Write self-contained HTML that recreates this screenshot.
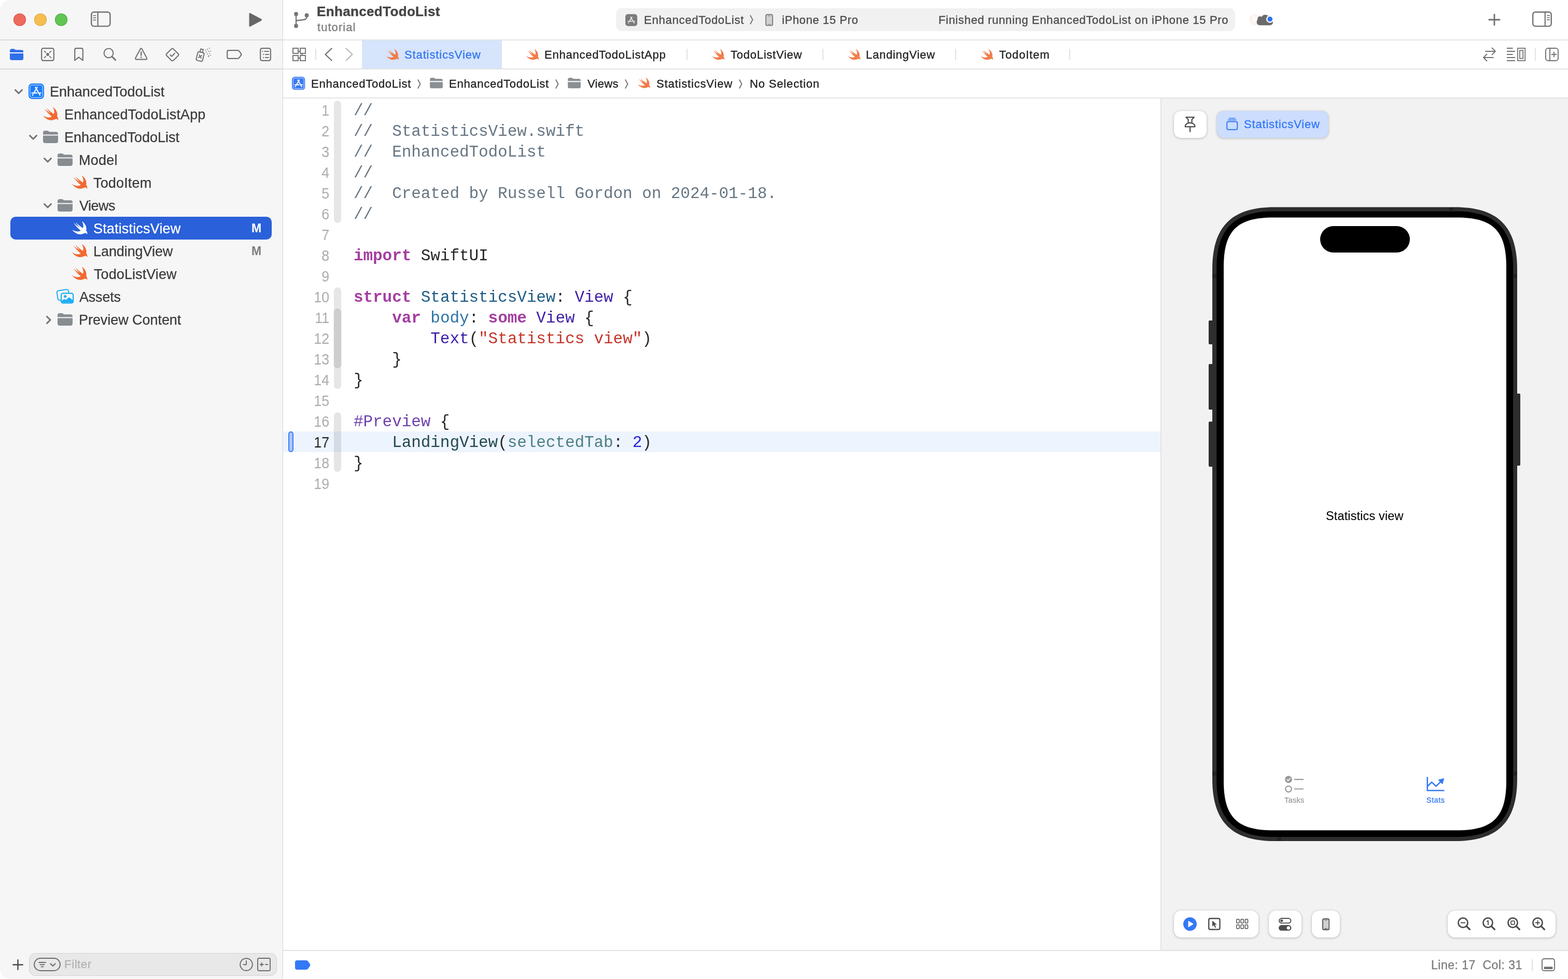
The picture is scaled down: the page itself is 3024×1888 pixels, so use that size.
<!DOCTYPE html>
<html lang="en">
<head>
<meta charset="utf-8">
<title>EnhancedTodoList — StatisticsView.swift</title>
<style>
*{box-sizing:border-box;margin:0;padding:0}
html,body{width:3024px;height:1888px;overflow:hidden;background:#fff}
body{font-family:"Liberation Sans",sans-serif;color:#262626;position:relative}
.abs{position:absolute}
.t{position:absolute;line-height:1;white-space:pre;-webkit-text-stroke-width:.35px}
.t,.m,#code,#nums{will-change:transform}
svg{position:absolute;overflow:visible}
.hl{position:absolute;background:#e4e4e4}
/* panels */
#sidebar{left:0;top:0;width:545px;height:1888px;background:#f6f6f6;border-radius:20px 0 0 20px}
#sbline{left:544px;top:0;width:2px;height:1888px;background:linear-gradient(to right,#ececec 0,#ececec 50%,#dedede 50%,#dedede 100%)}
#preview{left:2239px;top:190px;width:785px;height:1642px;background:#f2f2f2}
#pvline{left:2238px;top:190px;width:2px;height:1642px;background:#e3e3e3}
/* sidebar rows */
.row{position:absolute;left:0;width:545px;height:44px}
.row .t{font-size:27px;color:#3a3a3a;top:9.300px;-webkit-text-stroke-width:.25px}
.row svg{top:0}
.m{position:absolute;font-weight:bold;font-size:23px;line-height:1;top:10.800px;left:485.400px;color:#7d7d7d}
#sel{left:20px;top:418px;width:504px;height:44px;border-radius:10px;background:#2a60d9}
/* tabs */
.tabt{top:94.800px;color:#222}
.bct{top:150.900px;color:#222}
.sep{position:absolute;width:2px;background:#e2e2e2}
/* code */
#code{left:681.800px;top:193.700px;font-family:"Liberation Mono",monospace;font-size:31px;letter-spacing:-.063px;line-height:40px;white-space:pre;color:#262626}
#code b{font-weight:bold;color:#a43ea1}
.c{color:#677683}.ty{color:#1d5c85}.v{color:#3d1da8}.p{color:#2b74aa}.s{color:#c5352a}.pp{color:#6f41ad}.lv{color:#23494e}.a{color:#4c7f86}.n{color:#2923d5}
#nums{left:546px;top:193px;width:89.200px;text-align:right;font-size:29px;line-height:40px;color:#acacac;white-space:pre;transform:scaleX(.93);transform-origin:100% 0}
.rib{position:absolute;left:644px;width:14px;border-radius:7px;background:#e6e6e6}
.btn{position:absolute;background:#fff;border-radius:13px;box-shadow:0 1px 5px rgba(0,0,0,.24),0 0 1px rgba(0,0,0,.14)}
</style>
</head>
<body>
<div id="sidebar" class="abs"></div>
<div id="sbline" class="abs"></div>
<!-- horizontal dividers -->
<div class="hl" style="left:0;top:76px;width:544px;height:2px;background:#d9d9d9"></div>
<div class="hl" style="left:0;top:132px;width:544px;height:2px;background:#d9d9d9"></div>
<div class="hl" style="left:546px;top:76px;width:2478px;height:2px"></div>
<div class="hl" style="left:546px;top:132px;width:2478px;height:2px"></div>
<div class="hl" style="left:546px;top:188px;width:2478px;height:2px"></div>
<div class="hl" style="left:546px;top:1832px;width:2478px;height:2px;background:#e1e1e1"></div>
<div id="preview" class="abs"></div>
<div id="pvline" class="abs"></div>
<!-- icon symbols -->
<svg width="0" height="0" style="position:absolute">
<defs>
<symbol id="swift" viewBox="2.41 3.41 18.12 16.21" preserveAspectRatio="none"><path d="M13.543 3.41c4.114 2.47 6.545 7.162 5.549 11.131-.024.093-.05.181-.076.272l.002.001c2.062 2.538 1.5 5.258 1.236 4.745-1.072-2.086-3.066-1.568-4.088-1.043a6.803 6.803 0 0 1-.281.158l-.02.012-.002.002c-2.115 1.123-4.957 1.205-7.812-.022a12.568 12.568 0 0 1-5.64-4.838c.649.48 1.35.902 2.097 1.252 3.019 1.414 6.051 1.311 8.197-.002C9.651 12.73 7.101 9.67 5.146 7.191a10.628 10.628 0 0 1-1.005-1.384c2.34 2.142 6.038 4.83 7.365 5.576C8.69 8.408 6.208 4.743 6.324 4.86c4.436 4.47 8.528 6.996 8.528 6.996.154.085.27.154.36.213.085-.215.16-.437.224-.668.708-2.588-.09-5.548-1.893-7.992z"/></symbol>
<symbol id="folder" viewBox="0 0 29 24"><path d="M0 4Q0 0 4 0H8.2Q9.6 0 10.8 1L12.2 2.2H25Q29 2.200 29 6.200V7.400H0Z"/><path d="M0 9.600H29V19.800Q29 24 24.800 24H4.200Q0 24 0 19.800Z"/></symbol>
<symbol id="chev" viewBox="0 0 16 10"><path d="M1.500 1.500L8 8L14.500 1.500" fill="none" stroke="currentColor" stroke-width="3" stroke-linecap="round" stroke-linejoin="round"/></symbol>
<symbol id="chevr" viewBox="0 0 10 16"><path d="M1.500 1.500L8 8L1.500 14.500" fill="none" stroke="currentColor" stroke-width="3" stroke-linecap="round" stroke-linejoin="round"/></symbol>
<symbol id="proj" viewBox="0 0 30 30"><rect x="0" y="0" width="30" height="30" rx="7" fill="currentColor"/><rect x="2.800" y="2.800" width="24.400" height="24.400" rx="4.500" fill="none" stroke="#fff" stroke-opacity=".7" stroke-width="1.300"/><g fill="none" stroke="#fff" stroke-width="2.200" stroke-linecap="round"><path d="M6.500 18.300H16.500"/><path d="M21.300 18.300H23.700"/><path d="M16.800 7.300L10.300 18.300"/><path d="M8.600 21.300L7.800 22.600"/><path d="M13.300 7.300L22.200 22.500"/></g></symbol>
<symbol id="bcsep" viewBox="0 0 7 18"><path d="M1.300 1.200L5.500 9L1.300 16.800" fill="none" stroke="#7a7a7a" stroke-width="2.100" stroke-linecap="round" stroke-linejoin="round"/></symbol>
<symbol id="phone" viewBox="0 0 15 24" preserveAspectRatio="none"><rect x="1" y="1" width="13" height="22" rx="3" fill="#d0d0d0" stroke="currentColor" stroke-width="2"/><path d="M5.500 3.700H9.500M5 20.400H10" stroke="currentColor" stroke-width="1.200" fill="none" stroke-linecap="round"/></symbol>
<symbol id="mag" viewBox="0 0 25 25"><circle cx="10.500" cy="10.500" r="9.100" fill="none" stroke="currentColor" stroke-width="2.700"/><path d="M17.200 17.200L23.400 23.400" stroke="currentColor" stroke-width="3.300" stroke-linecap="round"/></symbol>
</defs>
</svg>

<!-- window toolbar -->
<div class="abs" style="left:26px;top:26px;width:24px;height:24px;border-radius:50%;background:#ee6a5e;box-shadow:inset 0 0 0 1px #dd4f45"></div>
<div class="abs" style="left:66px;top:26px;width:24px;height:24px;border-radius:50%;background:#f5be4f;box-shadow:inset 0 0 0 1px #dca63d"></div>
<div class="abs" style="left:106px;top:26px;width:24px;height:24px;border-radius:50%;background:#61c554;box-shadow:inset 0 0 0 1px #4cab3e"></div>
<svg style="left:175px;top:22px" width="38.600" height="30" viewBox="0 0 38 30" preserveAspectRatio="none"><rect x="1.200" y="1.200" width="35.600" height="27.400" rx="5" fill="none" stroke="#727272" stroke-width="2.400"/><path d="M13.500 1.500V28.500" stroke="#727272" stroke-width="2.200"/><path d="M5 8H9.500M5 12.300H9.500M5 16.600H9.500" stroke="#727272" stroke-width="1.700" stroke-linecap="round"/></svg>
<svg style="left:478.700px;top:23.700px" width="27.500" height="28.600" viewBox="0 0 27 28" preserveAspectRatio="none"><path d="M1.500 2.500Q1.500 0.300 3.600 1.300L24.800 12.600Q26.500 14 24.800 15.400L3.600 26.700Q1.500 27.700 1.500 25.500Z" fill="#666"/></svg>
<svg style="left:566.700px;top:23px" width="29" height="31" viewBox="0 0 29 31"><g fill="#757575"><circle cx="4" cy="4" r="3.900"/><circle cx="4" cy="27" r="3.900"/><circle cx="24.500" cy="6.500" r="3.900"/></g><path d="M4 4V27M4 18Q4 16.800 6 16.500L19 15Q24.500 14.300 24.500 9V6.500" fill="none" stroke="#757575" stroke-width="2.300"/></svg>
<div class="t" style="left:611.00px;font-size:26px;letter-spacing:0.356px;-webkit-text-stroke-width:.45px;top:9.300px;font-weight:bold;color:#454545">EnhancedTodoList</div>
<div class="t" style="left:612.00px;font-size:22px;letter-spacing:1.051px;top:41.900px;color:#7c7c7c">tutorial</div>
<!-- scheme / activity pill -->
<div class="abs" style="left:1188px;top:16px;width:1194px;height:44px;border-radius:11px;background:#f1f1f1"></div>
<svg style="left:1206px;top:26.500px" width="23" height="23.500" viewBox="0 0 30 30"><rect width="30" height="30" rx="6.500" fill="#7b7b7b"/><g fill="none" stroke="#f1f1f1" stroke-width="2.100" stroke-linecap="round"><path d="M6.500 18.300H16.500"/><path d="M21.300 18.300H23.700"/><path d="M16.800 7.300L10.300 18.300"/><path d="M8.600 21.300L7.800 22.600"/><path d="M13.300 7.300L22.200 22.500"/></g></svg>
<div class="t" style="left:1242.00px;font-size:22px;letter-spacing:0.756px;top:28.200px;color:#4b4b4b">EnhancedTodoList</div>
<svg style="left:1446px;top:29px" width="7" height="18"><use href="#bcsep"/></svg>
<svg style="left:1476.300px;top:26.500px;color:#828282" width="15" height="23.300"><use href="#phone"/></svg>
<div class="t" style="left:1507.75px;font-size:22px;letter-spacing:0.608px;top:28.200px;color:#4b4b4b">iPhone 15 Pro</div>
<div class="t" style="left:1809.75px;font-size:22px;letter-spacing:0.664px;top:28.200px;color:#4b4b4b">Finished running EnhancedTodoList on iPhone 15 Pro</div>
<!-- cloud status -->
<div class="abs" style="left:2409px;top:27px;width:22px;height:22px;border-radius:50%;background:#fdf2f1"></div>
<svg style="left:2414px;top:31px" width="12" height="12" viewBox="0 0 12 12"><path d="M2 2L10 10M10 2L2 10" stroke="#fff" stroke-width="2.400" stroke-linecap="round"/></svg>
<svg style="left:2423px;top:28px" width="33" height="22" viewBox="0 0 33 22"><path d="M6.800 20.700C3 20.700 0.700 18 0.700 14.800C0.700 13 1.300 11.200 2.300 9.800C2.200 6 4 3.700 6.500 3.600C8 3.500 9.300 4 10.200 4.800C11.500 2 13.800 0.500 16.500 0.500C22 0.500 25 3.500 26 7.500C30 8.500 32 11 32 14.500C32 18.500 29.500 20.700 25.500 20.700Z" fill="#6b6b6b"/><circle cx="26.200" cy="8.900" r="7.200" fill="#fff"/><circle cx="26.200" cy="8.900" r="4.800" fill="#2f6ff0"/></svg>
<svg style="left:2870px;top:26px" width="24" height="24" viewBox="0 0 24 24"><path d="M12 1.800V22.200M1.800 12H22.200" stroke="#6f6f6f" stroke-width="2.800" stroke-linecap="round"/></svg>
<svg style="left:2955px;top:22px" width="38" height="30" viewBox="0 0 38 30"><rect x="1.200" y="1.200" width="35.600" height="27.400" rx="5" fill="none" stroke="#727272" stroke-width="2.400"/><path d="M24.800 1.500V28.500" stroke="#727272" stroke-width="2.200"/><path d="M29 7.800H33.300M29 12H33.300M29 16.200H33.300" stroke="#727272" stroke-width="1.700" stroke-linecap="round"/></svg>

<!-- navigator selector icons -->
<svg style="left:19px;top:93.700px;color:#2f6fea" width="26.200" height="22.400" fill="#2f6fea"><use href="#folder"/></svg>
<svg style="left:79px;top:92px" width="26" height="26" viewBox="0 0 26 26"><rect x="1.200" y="1.200" width="23.600" height="23.600" rx="3.200" fill="none" stroke="#727272" stroke-width="2.200"/><circle cx="13" cy="13" r="2.900" fill="#727272"/><path d="M6.700 6.700L9.300 9.300M19.300 6.700L16.700 9.300M6.700 19.300L9.300 16.700M19.300 19.300L16.700 16.700" stroke="#727272" stroke-width="1.900" stroke-linecap="round"/></svg>
<svg style="left:143px;top:92px" width="18" height="26" viewBox="0 0 18 26"><path d="M1.200 24.500V4Q1.200 1.200 4 1.200H14Q16.800 1.200 16.800 4V24.500L9 18.300Z" fill="none" stroke="#727272" stroke-width="2.200" stroke-linejoin="round"/></svg>
<svg style="left:199px;top:92px" width="26" height="26" viewBox="0 0 26 26"><circle cx="10.500" cy="10.400" r="8.900" fill="none" stroke="#727272" stroke-width="2.100"/><path d="M17.200 17.200L23.600 23.600" stroke="#727272" stroke-width="3" stroke-linecap="round"/></svg>
<svg style="left:260px;top:92px" width="25" height="24" viewBox="0 0 25 24"><path d="M12.200 1.300Q13.100 1.300 13.600 2.200L23 19.800Q24 22.500 21.600 22.600H2.800Q0.400 22.500 1.400 19.800L10.800 2.200Q11.300 1.300 12.200 1.300Z" fill="none" stroke="#727272" stroke-width="2.100" stroke-linejoin="round"/><path d="M12.200 8.400V14.600" stroke="#727272" stroke-width="2.500" stroke-linecap="round"/><circle cx="12.200" cy="18.600" r="1.500" fill="#727272"/></svg>
<svg style="left:318.500px;top:91.800px" width="27" height="27" viewBox="0 0 27 27"><path d="M13.500 1.500Q14.400 1.500 15.200 2.300L24.700 11.800Q26.200 13.500 24.700 15.200L15.200 24.700Q13.500 26.200 11.800 24.700L2.300 15.200Q0.800 13.500 2.300 11.800L11.800 2.300Q12.600 1.500 13.500 1.500Z" fill="none" stroke="#727272" stroke-width="2.100"/><path d="M9.200 13.800L12.200 16.800L18 10.800" fill="none" stroke="#727272" stroke-width="2.100" stroke-linecap="round" stroke-linejoin="round"/></svg>
<svg style="left:377px;top:91px" width="31" height="28" viewBox="0 0 31 28"><g transform="rotate(14 9 17)" fill="none" stroke="#727272" stroke-width="2"><rect x="3" y="9.500" width="12.500" height="17" rx="2.500"/><rect x="6.700" y="3.500" width="5" height="6"/><path d="M6.800 15.500L11.700 20.500M11.700 15.500L6.800 20.500" stroke-linecap="round"/></g><g fill="#727272"><circle cx="19.500" cy="5.500" r=".9"/><circle cx="23" cy="4" r=".9"/><circle cx="27" cy="2" r=".9"/><circle cx="21" cy="9.500" r=".9"/><circle cx="25.500" cy="8" r=".9"/><circle cx="29" cy="7.500" r=".9"/><circle cx="23" cy="13" r=".9"/><circle cx="27" cy="11.800" r=".9"/><circle cx="25.500" cy="16.500" r=".9"/><circle cx="29" cy="15.500" r=".9"/><circle cx="25" cy="18" r=".9"/></g></svg>
<svg style="left:437px;top:96px" width="30" height="18" viewBox="0 0 30 18"><path d="M4 1.200H21.500Q23.200 1.200 24.200 2.600L28.200 8Q28.900 9 28.200 10L24.200 15.400Q23.200 16.800 21.500 16.800H4Q1.200 16.800 1.200 14V4Q1.200 1.200 4 1.200Z" fill="none" stroke="#727272" stroke-width="2.200" stroke-linejoin="round"/></svg>
<svg style="left:501px;top:92px" width="22" height="26" viewBox="0 0 22 26"><rect x="1.200" y="1.200" width="19.600" height="23.600" rx="3.200" fill="none" stroke="#727272" stroke-width="2.200"/><path d="M9.300 7H17M10.800 13H17M10.800 19H17" stroke="#727272" stroke-width="1.900" stroke-linecap="round"/><path d="M4.900 7H5.300M6.900 13H7.300M6.900 19H7.300" stroke="#727272" stroke-width="2" stroke-linecap="round"/></svg>

<!-- editor tab bar -->
<svg style="left:564px;top:92px" width="26" height="26" viewBox="0 0 26 26"><g fill="none" stroke="#727272" stroke-width="1.900"><rect x="1" y="1" width="10" height="10"/><rect x="15" y="1" width="10" height="10"/><rect x="1" y="15" width="10" height="10"/><rect x="15" y="15" width="10" height="10"/><path d="M11 7H15M18.500 11V15M11 20H15"/></g></svg>
<div class="sep" style="left:608px;top:94px;height:22px"></div>
<svg style="left:625px;top:92px" width="17" height="26" viewBox="0 0 17 26"><path d="M14.500 1.500L2.500 13L14.500 24.500" fill="none" stroke="#727272" stroke-width="2.300" stroke-linecap="round" stroke-linejoin="round"/></svg>
<svg style="left:665px;top:92px" width="17" height="26" viewBox="0 0 17 26"><path d="M2.500 1.500L14.500 13L2.500 24.500" fill="none" stroke="#b9b9b9" stroke-width="2.300" stroke-linecap="round" stroke-linejoin="round"/></svg>
<div class="abs" style="left:698px;top:78px;width:270px;height:54px;background:#d6e4fc"></div>
<svg style="left:744.800px;top:94.300px" width="24.500" height="21.500" fill="#f07d4a"><use href="#swift"/></svg>
<div class="t tabt" style="left:779.50px;font-size:22px;letter-spacing:0.871px;color:#3377ee">StatisticsView</div>
<svg style="left:1015.000px;top:94.300px" width="24.500" height="21.500" fill="#f07d4a"><use href="#swift"/></svg>
<div class="t tabt" style="left:1050.25px;font-size:22px;letter-spacing:0.754px">EnhancedTodoListApp</div>
<div class="sep" style="left:1324px;top:94px;height:22px"></div>
<svg style="left:1373.000px;top:94.300px" width="24.500" height="21.500" fill="#f07d4a"><use href="#swift"/></svg>
<div class="t tabt" style="left:1409.25px;font-size:22px;letter-spacing:0.742px">TodoListView</div>
<div class="sep" style="left:1586px;top:94px;height:22px"></div>
<svg style="left:1634.800px;top:94.300px" width="24.500" height="21.500" fill="#f07d4a"><use href="#swift"/></svg>
<div class="t tabt" style="left:1670.00px;font-size:22px;letter-spacing:0.730px">LandingView</div>
<div class="sep" style="left:1842px;top:94px;height:22px"></div>
<svg style="left:1890.800px;top:94.300px" width="24.500" height="21.500" fill="#f07d4a"><use href="#swift"/></svg>
<div class="t tabt" style="left:1927.00px;font-size:22px;letter-spacing:0.905px">TodoItem</div>
<div class="sep" style="left:2062px;top:94px;height:22px"></div>
<svg style="left:2859px;top:91px" width="27" height="28" viewBox="0 0 27 28"><path d="M6 8H25M18.500 1.500L25 8L18.500 14.500M21 20H2M8.500 13.500L2 20L8.500 26.500" fill="none" stroke="#727272" stroke-width="1.800" stroke-linecap="round" stroke-linejoin="round"/></svg>
<svg style="left:2906px;top:92px" width="37" height="26" viewBox="0 0 37 26"><path d="M0 1H11.600M0 7H16M0 13H11.600M0 19H16M0 25H16" stroke="#727272" stroke-width="1.800" fill="none"/><rect x="20.900" y="1" width="14.300" height="24" fill="none" stroke="#727272" stroke-width="1.800"/><rect x="24.900" y="5.200" width="6.300" height="15.600" fill="none" stroke="#727272" stroke-width="1.800"/></svg>
<div class="sep" style="left:2960px;top:93px;height:24px"></div>
<svg style="left:2980px;top:92px" width="26" height="26" viewBox="0 0 26 26"><rect x="1" y="1" width="24" height="24" rx="4.500" fill="none" stroke="#727272" stroke-width="1.900"/><path d="M9 1V25M12.500 13H21.500M17 8.500V17.500" fill="none" stroke="#727272" stroke-width="1.900" stroke-linecap="round"/></svg>

<!-- jump bar / breadcrumb -->
<svg style="left:563px;top:147.500px;color:#3779f6" width="25.500" height="25.500"><use href="#proj"/></svg>
<div class="t bct" style="left:599.75px;font-size:22px;letter-spacing:0.756px">EnhancedTodoList</div>
<svg style="left:804.500px;top:153px" width="7" height="18"><use href="#bcsep"/></svg>
<svg style="left:829px;top:149.500px" width="25" height="20.500" fill="#8a8f94"><use href="#folder"/></svg>
<div class="t bct" style="left:866.00px;font-size:22px;letter-spacing:0.739px">EnhancedTodoList</div>
<svg style="left:1070.500px;top:153px" width="7" height="18"><use href="#bcsep"/></svg>
<svg style="left:1095px;top:149.500px" width="25" height="20.500" fill="#8a8f94"><use href="#folder"/></svg>
<div class="t bct" style="left:1132.50px;font-size:22px;letter-spacing:0.303px">Views</div>
<svg style="left:1204.500px;top:153px" width="7" height="18"><use href="#bcsep"/></svg>
<svg style="left:1230px;top:149.200px" width="24" height="21" fill="#f07d4a"><use href="#swift"/></svg>
<div class="t bct" style="left:1265.75px;font-size:22px;letter-spacing:0.833px">StatisticsView</div>
<svg style="left:1424.500px;top:153px" width="7" height="18"><use href="#bcsep"/></svg>
<div class="t bct" style="left:1446.00px;font-size:22px;letter-spacing:0.841px">No Selection</div>

<!-- project navigator -->
<div id="sel" class="abs"></div>
<div class="row" style="top:154.5px"><svg style="left:28px;top:17.5px;color:#727272" width="16" height="10"><use href="#chev"/></svg><svg style="left:54.6px;top:6.500px;color:#1b7df8" width="30" height="30"><use href="#proj"/></svg><div class="t" style="left:96.20px;font-size:27px;letter-spacing:-0.058px">EnhancedTodoList</div></div>
<div class="row" style="top:198.5px"><svg style="left:82.700px;top:7.600px" width="29.600" height="26.100" fill="#f16a33"><use href="#swift"/></svg><div class="t" style="left:123.70px;font-size:27px;letter-spacing:0.117px">EnhancedTodoListApp</div></div>
<div class="row" style="top:242.5px"><svg style="left:56px;top:17.5px;color:#727272" width="16" height="10"><use href="#chev"/></svg><svg style="left:83.1px;top:9.500px" width="29" height="24" fill="#878c91"><use href="#folder"/></svg><div class="t" style="left:123.70px;font-size:27px;letter-spacing:-0.008px">EnhancedTodoList</div></div>
<div class="row" style="top:286.5px"><svg style="left:84px;top:17.5px;color:#727272" width="16" height="10"><use href="#chev"/></svg><svg style="left:110.9px;top:9.500px" width="29" height="24" fill="#878c91"><use href="#folder"/></svg><div class="t" style="left:152.10px;font-size:27px;letter-spacing:0.240px">Model</div></div>
<div class="row" style="top:330.5px"><svg style="left:138.900px;top:7.600px" width="29.600" height="26.100" fill="#f16a33"><use href="#swift"/></svg><div class="t" style="left:180.30px;font-size:27px;letter-spacing:0.162px">TodoItem</div></div>
<div class="row" style="top:374.5px"><svg style="left:84px;top:17.5px;color:#727272" width="16" height="10"><use href="#chev"/></svg><svg style="left:110.9px;top:9.500px" width="29" height="24" fill="#878c91"><use href="#folder"/></svg><div class="t" style="left:153.00px;font-size:27px;letter-spacing:-0.509px">Views</div></div>
<div class="row" style="top:418.5px"><svg style="left:138.900px;top:7.600px" width="29.600" height="26.100" fill="#fff"><use href="#swift"/></svg><div class="t" style="left:179.50px;font-size:27px;letter-spacing:0.168px;color:#fff">StatisticsView</div><div class="m" style="color:#fff">M</div></div>
<div class="row" style="top:462.5px"><svg style="left:138.900px;top:7.600px" width="29.600" height="26.100" fill="#f16a33"><use href="#swift"/></svg><div class="t" style="left:179.90px;font-size:27px;letter-spacing:-0.078px">LandingView</div><div class="m">M</div></div>
<div class="row" style="top:506.5px"><svg style="left:138.900px;top:7.600px" width="29.600" height="26.100" fill="#f16a33"><use href="#swift"/></svg><div class="t" style="left:180.50px;font-size:27px;letter-spacing:0.082px">TodoListView</div></div>
<div class="row" style="top:550.5px"><svg style="left:109px;top:6.500px" width="34" height="29" viewBox="0 0 34 29"><rect x="1.600" y="2.400" width="22.500" height="18.500" rx="3.200" fill="none" stroke="#1eaef5" stroke-width="2" transform="rotate(-9 12.800 11.600)"/><rect x="9.100" y="8.600" width="23" height="18.800" rx="3.200" fill="#f6f6f6" stroke="#1eaef5" stroke-width="2.200"/><circle cx="16.700" cy="14.600" r="2.700" fill="#1eaef5"/><path d="M10 23.200L14.300 19.800Q15 19.300 15.700 19.800L17.900 21.500L23.300 17Q24.400 16.300 25.400 17L31.300 21.800V24.300Q31.300 26.400 29.200 26.400H12Q10 26.400 10 24.300Z" fill="#1eaef5"/></svg><div class="t" style="left:153.00px;font-size:27px;letter-spacing:-0.205px">Assets</div></div>
<div class="row" style="top:594.5px"><svg style="left:88.5px;top:14px;color:#727272" width="10" height="16"><use href="#chevr"/></svg><svg style="left:110.9px;top:9.500px" width="29" height="24" fill="#878c91"><use href="#folder"/></svg><div class="t" style="left:152.20px;font-size:27px;letter-spacing:-0.057px">Preview Content</div></div>
<!-- navigator filter bar -->
<svg style="left:24px;top:1850px" width="21" height="21" viewBox="0 0 21 21"><path d="M10.500 1.200V19.800M1.200 10.500H19.800" stroke="#4a4a4a" stroke-width="2.400" stroke-linecap="round"/></svg>
<div class="abs" style="left:56px;top:1838px;width:478px;height:44px;border-radius:12px;background:#e8e8e8;border:1px solid #d2d2d2"></div>
<svg style="left:65px;top:1847px" width="52" height="26" viewBox="0 0 52 26"><rect x="1.100" y="1.100" width="49.800" height="23.800" rx="11.900" fill="none" stroke="#6c6c6c" stroke-width="2"/><path d="M10 9H23M12.500 13.200H20.500M14.500 17.400H18.500" stroke="#6c6c6c" stroke-width="1.900" stroke-linecap="round"/><path d="M32.500 11.500L37 16L41.500 11.500" fill="none" stroke="#6c6c6c" stroke-width="2.200" stroke-linecap="round" stroke-linejoin="round"/></svg>
<div class="t" style="left:124.00px;font-size:22.5px;letter-spacing:0.449px;top:1848.500px;color:#b3b3b3">Filter</div>
<svg style="left:462px;top:1847px" width="26" height="26" viewBox="0 0 26 26"><circle cx="13" cy="13" r="11.800" fill="none" stroke="#6c6c6c" stroke-width="1.900"/><path d="M13 6V13.300H7.500" fill="none" stroke="#6c6c6c" stroke-width="1.900" stroke-linecap="round" stroke-linejoin="round"/></svg>
<svg style="left:495.800px;top:1847px" width="26" height="26" viewBox="0 0 26 26"><rect x="1" y="1" width="24" height="24" rx="2.500" fill="none" stroke="#6c6c6c" stroke-width="1.900"/><path d="M5 13H12.500M8.700 9.200V16.800M15.500 13H21" stroke="#6c6c6c" stroke-width="1.900" fill="none"/></svg>

<!-- source editor -->
<div class="abs" style="left:546px;top:832px;width:1692px;height:40px;background:#eef4fe"></div>
<div class="abs" style="left:556px;top:832px;width:10px;height:40px;border-radius:5px;border:2px solid #3b7cf6;background:#a9c8fb"></div>
<div class="rib" style="top:194px;height:235.500px"></div>
<div class="rib" style="top:554px;height:195.500px"></div>
<div class="rib" style="top:593.500px;height:117px;background:#cecece;box-shadow:0 0 0 1.200px #f4f4f4"></div>
<div class="rib" style="top:794.500px;height:115px;background:rgba(0,0,0,.1)"></div>
<div id="nums" class="abs">1
2
3
4
5
6
7
8
9
10
11
12
13
14
15
16
<span style="color:#1f1f1f">17</span>
18
19</div>
<div id="code" class="abs"><span class="c">//</span>
<span class="c">//  StatisticsView.swift</span>
<span class="c">//  EnhancedTodoList</span>
<span class="c">//</span>
<span class="c">//  Created by Russell Gordon on 2024-01-18.</span>
<span class="c">//</span>

<b>import</b> SwiftUI

<b>struct</b> <span class="ty">StatisticsView</span>: <span class="v">View</span> {
    <b>var</b> <span class="p">body</span>: <b>some</b> <span class="v">View</span> {
        <span class="v">Text</span>(<span class="s">"Statistics view"</span>)
    }
}

<span class="pp">#Preview</span> {
    <span class="lv">LandingView</span>(<span class="a">selectedTab</span>: <span class="n">2</span>)
}
</div>

<!-- bottom status bar -->
<svg style="left:568.700px;top:1852px" width="29.500" height="18" viewBox="0 0 29.500 18"><path d="M4 0H21.500Q23.700 0 25 1.700L28.800 7.300Q29.700 9 28.800 10.700L25 16.300Q23.700 18 21.500 18H4Q0 18 0 14V4Q0 0 4 0Z" fill="#3478f6"/></svg>
<div class="t" style="left:2760.00px;font-size:23px;letter-spacing:0.487px;top:1850.400px;color:#7c7c7c;-webkit-text-stroke:.35px #7c7c7c">Line: 17  Col: 31</div>
<div class="sep" style="left:2954px;top:1850px;height:22.500px"></div>
<svg style="left:2972.700px;top:1848.200px" width="26" height="25" viewBox="0 0 26 25"><rect x="1" y="1" width="24" height="23" rx="4" fill="none" stroke="#727272" stroke-width="1.900"/><rect x="4.500" y="16.200" width="17" height="4.800" rx="1.500" fill="#727272"/></svg>

<!-- preview canvas -->
<div class="btn" style="left:2264px;top:214px;width:63px;height:52px"></div>
<svg style="left:2284px;top:224px" width="23" height="32" viewBox="0 0 23 32"><path d="M3.200 2H19M3.600 2.300L7.600 6.400V13.400M18.600 2.300L14.600 6.400V13.400M1.700 20.300Q1.700 15.200 7.200 13.500Q11.100 12.400 15 13.500Q20.500 15.200 20.500 20.300ZM11.100 20.300V30" fill="none" stroke="#4a4a4a" stroke-width="2.200" stroke-linecap="round" stroke-linejoin="round"/></svg>
<div class="btn" style="left:2347px;top:214px;width:215px;height:52px;background:#cdddfd"></div>
<svg style="left:2364.500px;top:226.600px" width="23" height="24" viewBox="0 0 23 24"><path d="M5.500 1H17M3.500 4.200H19" stroke="#3478f6" stroke-width="1.500" fill="none" stroke-linecap="round"/><rect x="1.200" y="7.600" width="20.100" height="15.300" rx="3" fill="none" stroke="#3478f6" stroke-width="2"/></svg>
<div class="t" style="left:2399.00px;font-size:22px;letter-spacing:0.814px;top:229.400px;color:#3478f6">StatisticsView</div>

<!-- device: iPhone 15 Pro -->
<div class="abs" style="left:2331px;top:618px;width:8px;height:46px;border-radius:2px;background:#2d2d2d"></div>
<div class="abs" style="left:2331px;top:702px;width:8px;height:87.500px;border-radius:2px;background:#2d2d2d"></div>
<div class="abs" style="left:2331px;top:812.500px;width:8px;height:87px;border-radius:2px;background:#2d2d2d"></div>
<div class="abs" style="left:2924px;top:759px;width:8px;height:138.500px;border-radius:2px;background:#2d2d2d"></div>
<svg id="device" style="left:2338px;top:399px" width="588" height="1224" viewBox="0 0 588 1224"><path d="M120.00 0.50L468.00 0.50C550.80 0.50 588.00 37.70 588.00 120.50L588.00 1103.00C588.00 1185.80 550.80 1223.00 468.00 1223.00L120.00 1223.00C37.20 1223.00 0.00 1185.80 0.00 1103.00L0.00 120.50C0.00 37.70 37.20 0.50 120.00 0.50Z" fill="#2e2e2e"/><path d="M118.20 8.60L470.20 8.60C546.20 8.60 580.20 42.60 580.20 118.60L580.20 1105.00C580.20 1181.00 546.20 1215.00 470.20 1215.00L118.20 1215.00C42.20 1215.00 8.20 1181.00 8.20 1105.00L8.20 118.60C8.20 42.60 42.20 8.60 118.20 8.60Z" fill="#000"/><path d="M117.00 20.50L472.00 20.50C541.30 20.50 567.00 46.20 567.00 115.50L567.00 1107.30C567.00 1176.60 541.30 1202.30 472.00 1202.30L117.00 1202.30C47.70 1202.30 22.00 1176.60 22.00 1107.30L22.00 115.50C22.00 46.20 47.70 20.50 117.00 20.50Z" fill="#fff"/></svg>
<div class="abs" style="left:2795px;top:399.500px;width:8px;height:8px;background:#232323"></div>
<div class="abs" style="left:2462.500px;top:1614px;width:8px;height:8px;background:#232323"></div>
<div class="abs" style="left:2338px;top:527.500px;width:8px;height:8.500px;background:#232323"></div>
<div class="abs" style="left:2918.200px;top:527.500px;width:7.800px;height:8.500px;background:#232323"></div>
<div class="abs" style="left:2338px;top:1487.500px;width:8px;height:8.500px;background:#232323"></div>
<div class="abs" style="left:2918.200px;top:1487.500px;width:7.800px;height:8.500px;background:#232323"></div>

<div class="abs" style="left:2545.700px;top:435.500px;width:173.500px;height:51.300px;border-radius:25.700px;background:#000"></div>
<div class="t" style="left:2557.00px;font-size:23.5px;letter-spacing:0.136px;top:984px;-webkit-text-stroke-width:.1px;color:#000">Statistics view</div>
<svg style="left:2478px;top:1495.500px" width="37" height="33" viewBox="0 0 37 33"><circle cx="7" cy="7.200" r="6.900" fill="#999"/><path d="M4 7.500L6.300 9.800L10.200 4.800" fill="none" stroke="#fff" stroke-width="1.700" stroke-linecap="round" stroke-linejoin="round"/><circle cx="7" cy="25.600" r="5.800" fill="none" stroke="#999" stroke-width="2.200"/><path d="M19 7.200H35M19 25.500H35" stroke="#999" stroke-width="2.200" stroke-linecap="round"/></svg>
<div class="t" style="left:2477.00px;font-size:14.5px;letter-spacing:0.296px;top:1536.100px;color:#999;-webkit-text-stroke:.25px #999">Tasks</div>
<svg style="left:2751px;top:1496.500px" width="35" height="31" viewBox="0 0 35 31"><path d="M1.800 2.400V27.500H33.400" fill="none" stroke="#3478f6" stroke-width="2.600" stroke-linecap="round" stroke-linejoin="round"/><path d="M2.600 18.900L10.100 11.400L18.600 19.300L28.500 9.400" fill="none" stroke="#3478f6" stroke-width="2.600" stroke-linejoin="round"/><path d="M23.300 7L33.500 4.400L30.800 15Z" fill="#3478f6" stroke="#3478f6" stroke-width="1" stroke-linejoin="round"/></svg>
<div class="t" style="left:2751.40px;font-size:14.5px;letter-spacing:0.502px;top:1536.100px;color:#3478f6;-webkit-text-stroke:.3px #3478f6">Stats</div>

<!-- canvas controls -->
<div class="btn" style="left:2264px;top:1756px;width:163px;height:52px;border-radius:14px"></div>
<svg style="left:2282px;top:1769px" width="26" height="26" viewBox="0 0 26 26"><circle cx="13" cy="13" r="13" fill="#3478f6"/><path d="M9.500 7.800Q9.500 6.600 10.600 7.200L18.800 12.200Q19.800 13 18.800 13.800L10.600 18.800Q9.500 19.400 9.500 18.200Z" fill="#fff"/></svg>
<svg style="left:2329.800px;top:1769.800px" width="23.800" height="23.800" viewBox="0 0 23 23"><rect x="1.200" y="1.200" width="20.600" height="20.600" rx="2.800" fill="none" stroke="#4d4d4d" stroke-width="2.300"/><path d="M7.700 5.200V16.300L10.500 13.700L12.600 18.500L14.600 17.600L12.500 12.900L16.300 12.700Z" fill="#4d4d4d"/></svg>
<svg style="left:2384px;top:1772px" width="23.300" height="19.500" viewBox="0 0 24 20"><g fill="none" stroke="#4d4d4d" stroke-width="1.500"><rect x=".8" y=".8" width="5.400" height="7.400" rx="1"/><rect x="9.300" y=".8" width="5.400" height="7.400" rx="1"/><rect x="17.800" y=".8" width="5.400" height="7.400" rx="1"/><rect x=".8" y="11.800" width="5.400" height="7.400" rx="1"/><rect x="9.300" y="11.800" width="5.400" height="7.400" rx="1"/><rect x="17.800" y="11.800" width="5.400" height="7.400" rx="1"/></g></svg>
<div class="btn" style="left:2447px;top:1756px;width:63px;height:52px;border-radius:14px"></div>
<svg style="left:2466px;top:1770px" width="24.500" height="25.300" viewBox="0 0 25 26" preserveAspectRatio="none"><rect x="1.100" y="1.100" width="22.800" height="9.300" rx="4.650" fill="none" stroke="#4d4d4d" stroke-width="2"/><circle cx="5.900" cy="5.750" r="2.600" fill="#4d4d4d"/><rect x="0" y="14.500" width="25" height="11" rx="5.500" fill="#4d4d4d"/><circle cx="19.300" cy="20" r="3.300" fill="#fff"/></svg>
<div class="btn" style="left:2530px;top:1756px;width:54px;height:52px;border-radius:14px"></div>
<svg style="left:2550.300px;top:1771px;color:#555" width="14.300" height="23"><use href="#phone"/></svg>
<div class="btn" style="left:2792px;top:1756px;width:207.700px;height:52px;border-radius:14px"></div>
<svg style="left:2810.500px;top:1769px;color:#4d4d4d" width="25" height="25"><use href="#mag"/></svg>
<svg style="left:2858.500px;top:1769px;color:#4d4d4d" width="25" height="25"><use href="#mag"/></svg>
<svg style="left:2906.700px;top:1769px;color:#4d4d4d" width="25" height="25"><use href="#mag"/></svg>
<svg style="left:2954.700px;top:1769px;color:#4d4d4d" width="25" height="25"><use href="#mag"/></svg>
<svg style="left:2810.500px;top:1769px" width="25" height="25" viewBox="0 0 25 25"><path d="M6.700 10.500H14.300" stroke="#4d4d4d" stroke-width="2" stroke-linecap="round"/></svg>
<svg style="left:2858.500px;top:1769px" width="25" height="25" viewBox="0 0 25 25"><path d="M8.800 8L11 6.400V14.600" fill="none" stroke="#4d4d4d" stroke-width="1.800" stroke-linecap="round" stroke-linejoin="round"/></svg>
<svg style="left:2906.700px;top:1769px" width="25" height="25" viewBox="0 0 25 25"><rect x="7.100" y="7.100" width="6.800" height="6.800" rx="1.200" fill="none" stroke="#4d4d4d" stroke-width="1.800"/></svg>
<svg style="left:2954.700px;top:1769px" width="25" height="25" viewBox="0 0 25 25"><path d="M6.700 10.500H14.300M10.500 6.700V14.300" stroke="#4d4d4d" stroke-width="2" stroke-linecap="round"/></svg>

<!--SECTIONS-->
</body>
</html>
